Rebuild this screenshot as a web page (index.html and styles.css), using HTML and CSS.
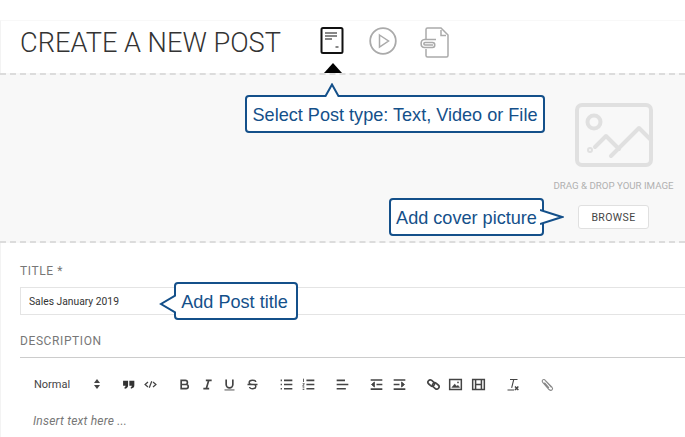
FILE: index.html
```html
<!DOCTYPE html>
<html lang="en">

<head>
    <meta charset="UTF-8">
    <meta name="viewport" content="width=device-width, initial-scale=1.0">
    <title>Create a new post</title>
    <link rel="stylesheet" href="styles.css">
</head>

<body>
    <div class="page">
        <header class="post-head">
            <h1>CREATE A NEW POST</h1>
            <div class="type-list">
                <span class="type-item active">
                    <svg width="24" height="28" viewBox="0 0 24 28" fill="none" stroke="#111">
                        <rect x="1.500" y="1" width="21" height="25" rx="1.500" stroke-width="2" />
                        <path d="M5 6h12M5 9h12M5 12h7M15.500 20h3" stroke-width="1.100" />
                    </svg>
                </span>
                <span class="type-item">
                    <svg width="28" height="28" viewBox="0 0 28 28" fill="none" stroke="#aaa" stroke-width="1.800">
                        <circle cx="14" cy="14" r="12.800" />
                        <path d="M10.500 8 19.500 14 10.500 20Z" stroke-width="1.500" />
                    </svg>
                </span>
                <span class="type-item file-type">
                    <svg width="30" height="31" viewBox="0 0 30 31" fill="none" stroke="#aaa" stroke-width="1.500">
                        <path d="M7 12V2.500Q7 1 8.500 1H22L29 8V28.500Q29 30 27.500 30H8.500Q7 30 7 28.500V22" />
                        <path d="M22 3V8.500H27" />
                        <path d="M17 12.500H5.500C1 12.500 1 20.500 5.500 20.500H13.500C16.500 20.500 16.500 15.500 13.500 15.500H6C4.500 15.500 4.500 18 6 18H14" stroke-width="1.600" />
                    </svg>
                </span>
            </div>
        </header>

        <section class="cover">
            <div class="cover-drop">
                <svg width="80" height="66" viewBox="0 0 80 66" fill="none" stroke="#e0e0e0" stroke-width="4" stroke-linecap="round" stroke-linejoin="round">
                    <rect x="3" y="3" width="74" height="60" rx="5" />
                    <circle cx="20" cy="20" r="6.500" />
                    <path d="M21 45 32 34 45 47M37 54 65 26 77 38" />
                    <circle cx="16" cy="48" r="1" />
                </svg>
                <p class="drop-text">DRAG &amp; DROP YOUR IMAGE</p>
                <button class="browse" type="button">BROWSE</button>
            </div>
        </section>

        <form class="post-form">
            <label class="field-label" for="title">TITLE *</label>
            <input class="title-input" type="text" id="title" value="Sales January 2019">
            <div class="field-label desc-label">DESCRIPTION</div>

            <div class="toolbar">
                <div class="tool-group picker">
                    <span>Normal</span>
                    <svg width="8" height="10" viewBox="0 0 8 10" fill="#444">
                        <path d="M4 0 7 4H1ZM4 10 1 6H7Z" />
                    </svg>
                </div>
                <div class="tool-group">
                    <span class="tool">
                        <svg viewBox="0 0 18 18" fill="#333">
                            <path d="M2.500 4.500h6v5.500c0 2-1 3.500-4 4l-.5-1.500c1-.3 1.500-1 1.500-2h-3ZM10 4.500h6v5.500c0 2-1 3.500-4 4l-.5-1.500c1-.3 1.500-1 1.500-2h-3Z" />
                        </svg>
                    </span>
                    <span class="tool">
                        <svg viewBox="0 0 18 18" class="line">
                            <path d="M6 6 2.500 9 6 12M12 6l3.500 3L12 12M10.500 5l-3 8" />
                        </svg>
                    </span>
                </div>
                <div class="tool-group">
                    <span class="tool">
                        <svg viewBox="0 0 18 18" class="line thick">
                            <path d="M5 4h5a2.500 2.500 0 0 1 0 5H5ZM5 9h6a2.500 2.500 0 0 1 0 5H5Z" />
                        </svg>
                    </span>
                    <span class="tool">
                        <svg viewBox="0 0 18 18" class="line thick">
                            <path d="M7 4h7M4 14h7M10.500 4l-3 10" />
                        </svg>
                    </span>
                    <span class="tool">
                        <svg viewBox="0 0 18 18" class="line thick">
                            <path d="M5 3v6a4 4 0 0 0 8 0V3" />
                            <path d="M3 15.500h12" stroke="#999" />
                        </svg>
                    </span>
                    <span class="tool">
                        <svg viewBox="0 0 18 18" class="line">
                            <path d="M13 6c-.5-3-8-3-8 .5 0 2 3 2.500 4 2.500M5.500 12c.5 3 7.500 3 7.500-.5 0-1-.5-1.500-1-2M3 9h12" stroke-width="1.700" />
                        </svg>
                    </span>
                </div>
                <div class="tool-group">
                    <span class="tool">
                        <svg viewBox="0 0 18 18" class="line heavy">
                            <path d="M6 4h10M6 9h10M6 14h10M2 4h1.500M2 9h1.500M2 14h1.500" />
                        </svg>
                    </span>
                    <span class="tool">
                        <svg viewBox="0 0 18 18" class="line heavy">
                            <path d="M6.500 4H16M6.500 9H16M6.500 14H16" />
                            <path d="M3 2v4M2 8h2L2 11h2M2 13h2M2 15h2" stroke-width="1" />
                        </svg>
                    </span>
                </div>
                <div class="tool-group">
                    <span class="tool">
                        <svg viewBox="0 0 18 18" class="line heavy">
                            <path d="M2 4h10M2 9h14M2 14h11" />
                        </svg>
                    </span>
                </div>
                <div class="tool-group">
                    <span class="tool">
                        <svg viewBox="0 0 18 18" class="line heavy">
                            <path d="M2 3.500h14M9 9h7M2 14.500h14" />
                            <path d="M6.500 6v6L3 9Z" fill="#444" stroke-width="1" />
                        </svg>
                    </span>
                    <span class="tool">
                        <svg viewBox="0 0 18 18" class="line heavy">
                            <path d="M2 3.500h14M2 9h7M2 14.500h14" />
                            <path d="M11.500 6v6L15 9Z" fill="#444" stroke-width="1" />
                        </svg>
                    </span>
                </div>
                <div class="tool-group">
                    <span class="tool">
                        <svg viewBox="0 0 18 18" class="line thick">
                            <rect x="2" y="4.500" width="8.500" height="5.500" rx="2.750" transform="rotate(40 6.250 7.250)" />
                            <rect x="7.500" y="8" width="8.500" height="5.500" rx="2.750" transform="rotate(40 11.750 10.750)" />
                        </svg>
                    </span>
                    <span class="tool">
                        <svg viewBox="0 0 18 18" class="line">
                            <rect x="2" y="3" width="14" height="12" stroke-width="1.800" />
                            <path d="M4.500 12.500 8 8.500 10.500 11 12 10l2 2.500Z" fill="#444" stroke-width=".5" />
                            <circle cx="12" cy="6.500" r="1" fill="#444" stroke="none" />
                        </svg>
                    </span>
                    <span class="tool">
                        <svg viewBox="0 0 18 18" class="line">
                            <rect x="2" y="3" width="14" height="12" stroke-width="1.800" />
                            <path d="M5.500 3v12M12.500 3v12M5.500 9h7" stroke-width="1.800" />
                        </svg>
                    </span>
                </div>
                <div class="tool-group">
                    <span class="tool">
                        <svg viewBox="0 0 18 18" class="line">
                            <path d="M6 3h9M10.500 3l-2.500 10M3 15.500h8" stroke-width="1.300" />
                            <path d="M12 11.500l4 4M16 11.500l-4 4" stroke-width="1.800" />
                        </svg>
                    </span>
                </div>
                <div class="tool-group">
                    <span class="tool">
                        <svg viewBox="0 0 18 18" fill="none" stroke="#888" stroke-width="1.300">
                            <path d="M15 12.500 7.500 4c-2-2.500-5 0-3 2.500l7.500 8.500c3 2.500 5.500-.5 3.500-3L7.800 4.500M12 13 6.500 6.800" />
                        </svg>
                    </span>
                </div>
            </div>

            <p class="placeholder">Insert text here ...</p>
        </form>

        <span class="type-arrow"></span>

        <div class="callout callout-type">
            Select Post type: Text, Video or File
            <svg class="tail tail-up" width="18" height="14" viewBox="0 0 18 14">
                <path d="M2 14 9 1.500 16 14" fill="#fff" stroke="#14508a" stroke-width="2" />
            </svg>
        </div>
        <div class="callout callout-cover">
            Add cover picture
            <svg class="tail tail-right" width="24" height="18" viewBox="0 0 24 18">
                <path d="M0 2 22 9 0 16" fill="#fff" stroke="#14508a" stroke-width="2" />
            </svg>
        </div>
        <div class="callout callout-title">
            Add Post title
            <svg class="tail tail-left" width="17" height="22" viewBox="0 0 17 22">
                <path d="M17 2 2 11 17 20" fill="#fff" stroke="#14508a" stroke-width="2" />
            </svg>
        </div>
    </div>
</body>

</html>
```
FILE: styles.css
```css
* {
    box-sizing: border-box;
}

html,
body {
    margin: 0;
    height: 100%;
    overflow: hidden;
    background: #fff;
}

body {
    padding-top: 20px;
    font-family: Roboto, "Liberation Sans", sans-serif;
}

.page {
    position: relative;
    height: 417px;
    border-top: 1px solid #f8f8f8;
    border-left: 1px solid #f3f3f3;
}

.post-head {
    display: flex;
    align-items: flex-start;
    height: 52px;
    padding-left: 19px;
}

.post-head h1 {
    margin: 4px 0 0;
    width: 261px;
    font-size: 27.2px;
    font-weight: 300;
    line-height: 36px;
    color: #333;
    white-space: nowrap;
}

.type-list {
    display: flex;
    gap: 25px;
    margin: 6px 0 0 39px;
}

.type-item {
    display: block;
    height: 31px;
}

.type-item svg {
    display: block;
}

.file-type {
    margin-left: -3px;
}

.type-arrow {
    position: absolute;
    left: 323px;
    top: 42px;
    border-left: 9px solid transparent;
    border-right: 9px solid transparent;
    border-bottom: 10px solid #000;
}

.cover {
    display: flex;
    justify-content: flex-end;
    height: 170px;
    margin-left: -1px;
    padding: 27px 11px 0 0;
    background: #f8f8f8;
    border-top: 2px dashed #dcdcdc;
    border-bottom: 2px dashed #dcdcdc;
}

.cover-drop {
    display: flex;
    flex-direction: column;
    align-items: center;
    width: 121px;
}

.drop-text {
    margin: 12px 0 0;
    font-size: 9.7px;
    line-height: 12px;
    color: #b0b0b0;
    white-space: nowrap;
}

.browse {
    width: 71px;
    height: 24px;
    margin-top: 13px;
    padding: 0;
    font-family: inherit;
    font-size: 10.5px;
    letter-spacing: 0.4px;
    color: #444;
    background: #fff;
    border: 1px solid #e0e0e0;
    border-radius: 3px;
}

.post-form {
    padding: 20px 0 0 19px;
}

.field-label {
    display: block;
    font-size: 12px;
    line-height: 16px;
    letter-spacing: 0.6px;
    color: #777;
}

.title-input {
    display: block;
    width: 680px;
    height: 28px;
    margin-top: 8px;
    padding: 0 8px;
    font-family: inherit;
    font-size: 10.3px;
    color: #333;
    background: #fff;
    border: 1px solid #e4e4e4;
    outline: none;
}

.desc-label {
    margin-top: 18px;
    padding-bottom: 8px;
    border-bottom: 1px solid #ccc;
}

.toolbar {
    display: flex;
    align-items: center;
    gap: 11.5px;
    height: 18px;
    margin-top: 17px;
    padding-left: 14px;
}

.tool-group {
    display: flex;
    align-items: center;
}

.picker {
    justify-content: space-between;
    width: 71.5px;
    padding-right: 5px;
    font-size: 11px;
    color: #444;
}

.tool {
    display: flex;
    justify-content: center;
    width: 22.5px;
}

.tool svg {
    width: 15px;
    height: 15px;
}

.line {
    fill: none;
    stroke: #444;
    stroke-width: 1.5;
}

.line.thick {
    stroke-width: 2;
}

.line.heavy {
    stroke-width: 1.9;
}

.placeholder {
    margin: 20px 0 0 13px;
    font-size: 12px;
    font-style: italic;
    line-height: 16px;
    letter-spacing: 0.2px;
    color: #777;
}

.callout {
    position: absolute;
    display: flex;
    align-items: center;
    justify-content: center;
    height: 38px;
    padding-top: 2px;
    font-family: "Liberation Sans", Arial, sans-serif;
    font-size: 18.1px;
    color: #14508a;
    white-space: nowrap;
    background: #fff;
    border: 2px solid #14508a;
    border-radius: 4px;
}

.callout-type {
    left: 244px;
    top: 74px;
    width: 300px;
}

.callout-cover {
    left: 388px;
    top: 177px;
    width: 155px;
}

.callout-title {
    left: 173px;
    top: 261px;
    width: 124px;
    padding-right: 3px;
}

.tail {
    position: absolute;
}

.tail-up {
    left: 76px;
    top: -14px;
}

.tail-right {
    left: 149px;
    top: 8px;
}

.tail-left {
    left: -17px;
    top: 9px;
}
```
